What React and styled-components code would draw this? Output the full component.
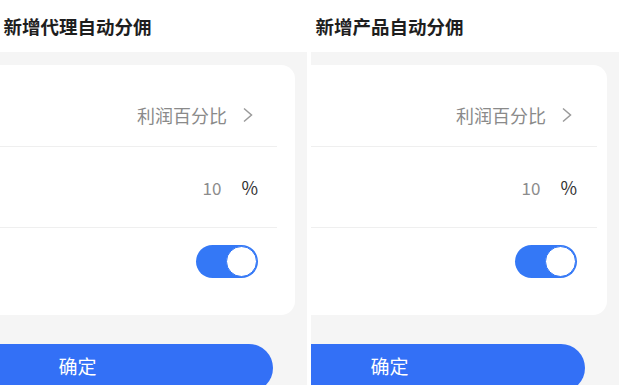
import React, { useState } from "react";
import styled, { createGlobalStyle } from "styled-components";

const GlobalStyle = createGlobalStyle`
  html, body {
    margin: 0;
    padding: 0;
    background: #ffffff;
  }
  body {
    font-family: "Noto Sans CJK SC", "Noto Sans", sans-serif;
  }
`;

const Page = styled.div`
  display: flex;
  align-items: flex-start;
  gap: 4px;
  width: 638px;
  height: 385px;
  overflow: hidden;
  background: #ffffff;
`;

// each phone screenshot is cropped on the left, so the screen is pinned to the right edge
const Viewport = styled.div`
  width: ${({ width }) => width}px;
  height: 100%;
  overflow: hidden;
  display: flex;
  align-items: flex-start;
  justify-content: flex-end;
  flex-shrink: 0;
`;

const Screen = styled.div`
  width: 459px;
  min-height: 400px;
  flex-shrink: 0;
  display: flex;
  flex-direction: column;
  background: #f5f5f5;
`;

const Header = styled.div`
  height: 52px;
  flex-shrink: 0;
  display: flex;
  align-items: center;
  justify-content: center;
  background: #ffffff;
  font-size: 18.5px;
  font-weight: 700;
  color: #1e1e1e;
`;

const Body = styled.div`
  display: flex;
  flex-direction: column;
  flex-shrink: 0;
  padding: 13px 12px 0;
`;

const Card = styled.div`
  display: flex;
  flex-direction: column;
  flex-shrink: 0;
  padding: 19px 0 20px;
  border-radius: 14px;
  background: #ffffff;
`;

const Row = styled.div`
  height: ${({ h }) => h}px;
  flex-shrink: 0;
  display: flex;
  align-items: center;
  justify-content: flex-end;
  margin: 0 ${({ edge }) => edge}px 0 18px;
  padding-right: ${({ pad }) => pad}px;
  border-bottom: ${({ divided }) => (divided ? "1px solid #efefef" : "none")};
`;

const Hint = styled.span`
  font-size: 18px;
  color: #8a8a8a;
`;

const Chevron = styled.svg`
  width: 13px;
  height: 16px;
  margin-left: 14px;
  margin-right: 4px;
`;

const Value = styled.span`
  font-size: 17px;
  color: #8c8c8c;
`;

const Unit = styled.span`
  margin-left: 20px;
  font-size: 18px;
  color: #333333;
`;

const Switch = styled.button`
  position: relative;
  width: 62px;
  height: 33px;
  padding: 0;
  border: none;
  border-radius: 17px;
  background: ${({ on }) => (on ? "#3478f6" : "#e5e5e5")};
  cursor: pointer;
`;

const Knob = styled.span`
  position: absolute;
  top: 1px;
  left: ${({ on }) => (on ? "30px" : "1px")};
  width: 31px;
  height: 31px;
  box-sizing: border-box;
  border-radius: 50%;
  border: 1.5px solid #3478f6;
  background: #ffffff;
`;

const Submit = styled.button`
  height: 48px;
  flex-shrink: 0;
  margin: 29px 22px 0;
  padding: 0 0 5px;
  border: none;
  border-radius: 24px;
  background: #3370f6;
  color: #ffffff;
  font-family: inherit;
  font-size: 19px;
`;

const Toggle = () => {
  const [on, setOn] = useState(true);
  return (
    <Switch on={on} onClick={() => setOn(!on)}>
      <Knob on={on} />
    </Switch>
  );
};

const Panel = ({ title, width, edge, pad }) => (
  <Viewport width={width}>
    <Screen>
      <Header>{title}</Header>
      <Body>
        <Card>
          <Row h={62} edge={edge} pad={pad} divided>
            <Hint>利润百分比</Hint>
            <Chevron viewBox="0 0 13 16">
              <polyline
                points="3,1.5 10.5,8 3,14.5"
                fill="none"
                stroke="#9a9a9a"
                strokeWidth="1.5"
              />
            </Chevron>
          </Row>
          <Row h={80} edge={edge} pad={pad} divided>
            <Value>10</Value>
            <Unit>%</Unit>
          </Row>
          <Row h={67} edge={edge} pad={pad}>
            <Toggle />
          </Row>
        </Card>
        <Submit>确定</Submit>
      </Body>
    </Screen>
  </Viewport>
);

export default function App() {
  return (
    <>
      <GlobalStyle />
      <Page>
        <Panel title="新增代理自动分佣" width={307} edge={18} pad={19} />
        <Panel title="新增产品自动分佣" width={308} edge={10} pad={20} />
      </Page>
    </>
  );
}
